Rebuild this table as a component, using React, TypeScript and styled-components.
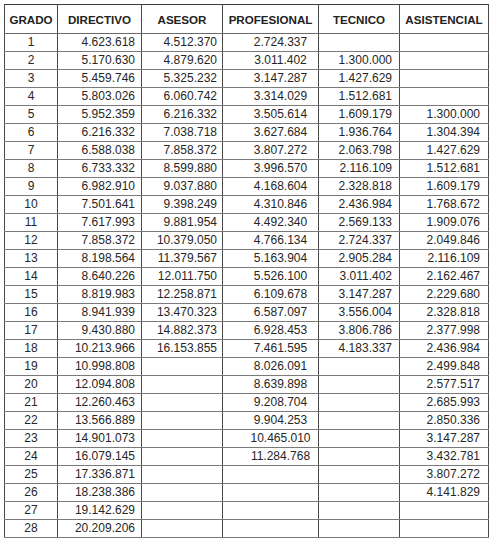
import React from 'react';
import styled, { createGlobalStyle } from 'styled-components';

const GlobalStyle = createGlobalStyle`
  html, body {
    margin: 0;
    padding: 0;
    background: #fff;
  }
  body {
    font-family: 'Liberation Sans', Arial, sans-serif;
    color: #1c1c1c;
  }
`;

type Align = 'center' | 'right' | 'offset';

interface Column {
  title: string;
  width: number;
  align: Align;
  pad: number;
}

const columns: Column[] = [
  { title: 'GRADO', width: 53, align: 'center', pad: 0 },
  { title: 'DIRECTIVO', width: 84, align: 'right', pad: 6 },
  { title: 'ASESOR', width: 81, align: 'right', pad: 5 },
  { title: 'PROFESIONAL', width: 96, align: 'offset', pad: 20 },
  { title: 'TECNICO', width: 81, align: 'right', pad: 7 },
  { title: 'ASISTENCIAL', width: 89, align: 'right', pad: 8 },
];

// grado, directivo, asesor, profesional, tecnico, asistencial
const rows: string[][] = [
  ['1', '4.623.618', '4.512.370', '2.724.337', '', ''],
  ['2', '5.170.630', '4.879.620', '3.011.402', '1.300.000', ''],
  ['3', '5.459.746', '5.325.232', '3.147.287', '1.427.629', ''],
  ['4', '5.803.026', '6.060.742', '3.314.029', '1.512.681', ''],
  ['5', '5.952.359', '6.216.332', '3.505.614', '1.609.179', '1.300.000'],
  ['6', '6.216.332', '7.038.718', '3.627.684', '1.936.764', '1.304.394'],
  ['7', '6.588.038', '7.858.372', '3.807.272', '2.063.798', '1.427.629'],
  ['8', '6.733.332', '8.599.880', '3.996.570', '2.116.109', '1.512.681'],
  ['9', '6.982.910', '9.037.880', '4.168.604', '2.328.818', '1.609.179'],
  ['10', '7.501.641', '9.398.249', '4.310.846', '2.436.984', '1.768.672'],
  ['11', '7.617.993', '9.881.954', '4.492.340', '2.569.133', '1.909.076'],
  ['12', '7.858.372', '10.379.050', '4.766.134', '2.724.337', '2.049.846'],
  ['13', '8.198.564', '11.379.567', '5.163.904', '2.905.284', '2.116.109'],
  ['14', '8.640.226', '12.011.750', '5.526.100', '3.011.402', '2.162.467'],
  ['15', '8.819.983', '12.258.871', '6.109.678', '3.147.287', '2.229.680'],
  ['16', '8.941.939', '13.470.323', '6.587.097', '3.556.004', '2.328.818'],
  ['17', '9.430.880', '14.882.373', '6.928.453', '3.806.786', '2.377.998'],
  ['18', '10.213.966', '16.153.855', '7.461.595', '4.183.337', '2.436.984'],
  ['19', '10.998.808', '', '8.026.091', '', '2.499.848'],
  ['20', '12.094.808', '', '8.639.898', '', '2.577.517'],
  ['21', '12.260.463', '', '9.208.704', '', '2.685.993'],
  ['22', '13.566.889', '', '9.904.253', '', '2.850.336'],
  ['23', '14.901.073', '', '10.465.010', '', '3.147.287'],
  ['24', '16.079.145', '', '11.284.768', '', '3.432.781'],
  ['25', '17.336.871', '', '', '', '3.807.272'],
  ['26', '18.238.386', '', '', '', '4.141.829'],
  ['27', '19.142.629', '', '', '', ''],
  ['28', '20.209.206', '', '', '', ''],
];

export default function App() {
  return (
    <>
      <GlobalStyle />
      <Page>
        <Table>
          <colgroup>
            {columns.map((c) => (
              <col key={c.title} style={{ width: c.width }} />
            ))}
          </colgroup>
          <thead>
            <HeadRow>
              {columns.map((c) => (
                <HeadCell key={c.title}>{c.title}</HeadCell>
              ))}
            </HeadRow>
          </thead>
          <tbody>
            {rows.map((row) => (
              <Row key={row[0]}>
                {row.map((value, i) => (
                  <Cell key={i} align={columns[i].align} pad={columns[i].pad}>
                    {value}
                  </Cell>
                ))}
              </Row>
            ))}
          </tbody>
        </Table>
      </Page>
    </>
  );
}

const Page = styled.div`
  padding: 4px 0 0 4px;
`;

const Table = styled.table`
  width: 484px;
  table-layout: fixed;
  border-collapse: collapse;
  border: 1.5px solid #3a3a3a;
  font-family: 'Liberation Sans', Arial, sans-serif;
`;

const HeadRow = styled.tr`
  height: 29px;
`;

const HeadCell = styled.th`
  padding: 2px 0 0 0;
  font-size: 11.6px;
  line-height: 14px;
  font-weight: bold;
  text-align: center;
  color: #222;
  border-left: 1px solid #4a4a4a;
  border-right: 1px solid #4a4a4a;
  border-bottom: 1px solid #6a6a6a;
  white-space: nowrap;
`;

const Row = styled.tr`
  height: 18px;
`;

const Cell = styled.td<{ align: Align; pad: number }>`
  padding: 0 ${({ align, pad }) => (align === 'right' ? `${pad}px` : '0')} 0
    ${({ align, pad }) => (align === 'offset' ? `${pad}px` : '0')};
  font-size: 12px;
  line-height: 15px;
  color: #262626;
  text-align: ${({ align }) => (align === 'right' ? 'right' : 'center')};
  white-space: nowrap;
  border-left: 1px solid #4a4a4a;
  border-right: 1px solid #4a4a4a;
  border-bottom: 1px solid #7a7a7a;
`;
